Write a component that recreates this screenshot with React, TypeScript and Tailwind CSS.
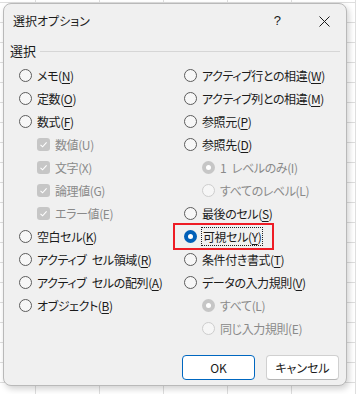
import React from 'react';

type Kind = 'radio' | 'radio-on' | 'radio-dis-on' | 'radio-dis' | 'check-dis';

type Opt = {
 kind: Kind;
 label: string;
 k: string;
 indent?: boolean;
 focus?: boolean;
 marked?: boolean;
};

const left: Opt[] = [
 { kind: 'radio', label: 'メモ', k: 'N' },
 { kind: 'radio', label: '定数', k: 'O' },
 { kind: 'radio', label: '数式', k: 'F' },
 { kind: 'check-dis', label: '数値', k: 'U', indent: true },
 { kind: 'check-dis', label: '文字', k: 'X', indent: true },
 { kind: 'check-dis', label: '論理値', k: 'G', indent: true },
 { kind: 'check-dis', label: 'エラー値', k: 'E', indent: true },
 { kind: 'radio', label: '空白セル', k: 'K' },
 { kind: 'radio', label: 'アクティブ\u2002セル領域', k: 'R' },
 { kind: 'radio', label: 'アクティブ\u2002セルの配列', k: 'A' },
 { kind: 'radio', label: 'オブジェクト', k: 'B' },
];

const right: Opt[] = [
 { kind: 'radio', label: 'アクティブ行との相違', k: 'W' },
 { kind: 'radio', label: 'アクティブ列との相違', k: 'M' },
 { kind: 'radio', label: '参照元', k: 'P' },
 { kind: 'radio', label: '参照先', k: 'D' },
 { kind: 'radio-dis-on', label: '1\u2002レベルのみ', k: 'I', indent: true },
 { kind: 'radio-dis', label: 'すべてのレベル', k: 'L', indent: true },
 { kind: 'radio', label: '最後のセル', k: 'S' },
 { kind: 'radio-on', label: '可視セル', k: 'Y', focus: true, marked: true },
 { kind: 'radio', label: '条件付き書式', k: 'T' },
 { kind: 'radio', label: 'データの入力規則', k: 'V' },
 { kind: 'radio-dis-on', label: 'すべて', k: 'L', indent: true },
 { kind: 'radio-dis', label: '同じ入力規則', k: 'E', indent: true },
];

function Mark({ kind }: { kind: Kind }) {
 if (kind === 'check-dis') {
 return (
 <span className="flex size-[13px] shrink-0 items-center justify-center rounded-[3px] bg-[#c6c6c6]">
 <svg width="9" height="9" viewBox="0 0 9 9" fill="none">
 <path d="M1.5 4.8 L3.6 6.8 L7.6 2.4" stroke="#fff" strokeWidth="1.1" />
 </svg>
 </span>
 );
 }
 if (kind === 'radio-on') {
 return (
 <span className="flex size-[13px] shrink-0 items-center justify-center rounded-full bg-[#005fb8]">
 <span className="size-[5px] rounded-full bg-white" />
 </span>
 );
 }
 if (kind === 'radio-dis-on') {
 return (
 <span className="flex size-[13px] shrink-0 items-center justify-center rounded-full bg-[#c6c6c6]">
 <span className="size-[5px] rounded-full bg-white" />
 </span>
 );
 }
 if (kind === 'radio-dis') {
 return <span className="size-[13px] shrink-0 rounded-full border border-[#cdcdcd] bg-[#f6f6f6]" />;
 }
 return <span className="size-[13px] shrink-0 rounded-full border border-[#5c5c5c] bg-[#f7f7f7]" />;
}

function Item({ o }: { o: Opt }) {
 const dis = o.kind === 'check-dis' || o.kind === 'radio-dis' || o.kind === 'radio-dis-on';
 return (
 <div className={`relative flex h-[23px] items-center gap-[5px] ${o.indent ? 'pl-[18px]' : ''}`}>
 {o.marked && (
 <div className="absolute left-[-11px] top-[-2px] h-[27px] w-[101px] border-2 border-[#ee1c25]" />
 )}
 <Mark kind={o.kind} />
 <span
 className={`whitespace-nowrap leading-[17px] tracking-[-0.4px] ${dis ? 'text-[#8a8a8a]' : 'text-[#1b1b1b]'} ${
 o.focus ? 'outline-1 outline-dotted outline-[#222] outline-offset-0 px-[1px]' : ''
 }`}
 >
 {o.label}(
 {dis ? o.k : <span className="underline underline-offset-[2px]">{o.k}</span>})
 </span>
 </div>
 );
}

export default function App() {
 return (
 <div className="h-[394px] w-[356px] overflow-hidden bg-white bg-[linear-gradient(to_right,#dedede_1px,transparent_1px),linear-gradient(to_bottom,#dedede_1px,transparent_1px)] bg-[size:64px_20px] bg-[position:35px_2px] pl-[3px] pt-[3px] font-['Noto_Sans_CJK_JP',sans-serif] text-[12px] [font-feature-settings:'palt']">
 <div className="flex h-[383px] w-[344px] flex-col rounded-[8px] border border-[#b9b9b9] bg-[#f0f0f0] shadow-[2px_3px_6px_rgba(0,0,0,0.18)]">
 {/* title bar */}
 <div className="flex h-[34px] items-center pl-[9px] pr-[16px]">
 <span className="text-[12px] text-[#1b1b1b]">選択オプション</span>
 <span className="ml-auto mr-[38px] font-['Liberation_Sans',sans-serif] text-[13px] text-[#1b1b1b]">?</span>
 <svg width="11" height="11" viewBox="0 0 11 11">
 <path d="M0.5 0.5 L10.5 10.5 M10.5 0.5 L0.5 10.5" stroke="#1b1b1b" strokeWidth="1" />
 </svg>
 </div>

 {/* group header */}
 <div className="flex h-[26px] items-center gap-[4px] pl-[6px] pr-[6px]">
 <span className="text-[13px] text-[#1b1b1b]">選択</span>
 <div className="h-px flex-1 bg-[#d6d6d6]" />
 </div>

 {/* options */}
 <div className="grid grid-cols-[165px_1fr] pl-[15px]">
 <div className="flex flex-col">
 {left.map((o, i) => (
 <Item key={i} o={o} />
 ))}
 </div>
 <div className="flex flex-col">
 {right.map((o, i) => (
 <Item key={i} o={o} />
 ))}
 </div>
 </div>

 {/* buttons */}
 <div className="mt-[15px] flex justify-end gap-[11px] pr-[7px]">
 <button className="h-[25px] w-[73px] rounded-[4px] border border-[#0067c0] bg-white text-[12px] text-[#1b1b1b]">
 OK
 </button>
 <button className="h-[25px] w-[73px] rounded-[4px] border border-[#d0d0d0] border-b-[#b5b5b5] bg-white text-[12px] text-[#1b1b1b]">
 キャンセル
 </button>
 </div>
 </div>
 </div>
 );
}
